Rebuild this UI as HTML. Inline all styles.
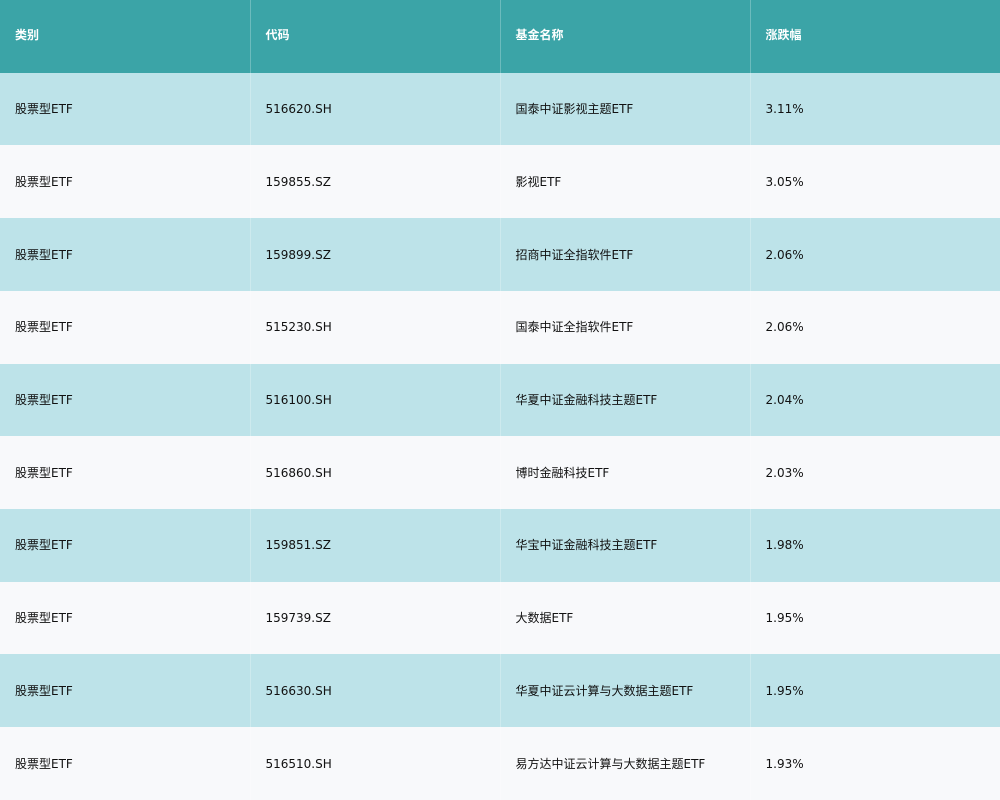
<!DOCTYPE html>
<html><head><meta charset="utf-8"><style>
body{margin:0;width:1000px;height:800px;overflow:hidden;font-family:"DejaVu Sans","Noto Sans CJK SC",sans-serif;font-size:12px;color:#111}
table{border-collapse:collapse;width:1000px;table-layout:fixed}
td,th{height:72.73px;padding:0 0 0 15px;text-align:left;border-left:1px solid rgba(255,255,255,.25);box-sizing:border-box;line-height:14px}
td:first-child,th:first-child{border-left:none}
th{background:#3ba4a7;color:#fff;font-weight:bold;padding-bottom:3px}
tr:nth-child(even) td{background:#bde3e9}
tr:nth-child(odd) td{background:#f8f9fb}
</style></head><body>
<table>
<tr><th>类别</th><th>代码</th><th>基金名称</th><th>涨跌幅</th></tr>
<tr><td>股票型ETF</td><td>516620.SH</td><td>国泰中证影视主题ETF</td><td>3.11%</td></tr>
<tr><td>股票型ETF</td><td>159855.SZ</td><td>影视ETF</td><td>3.05%</td></tr>
<tr><td>股票型ETF</td><td>159899.SZ</td><td>招商中证全指软件ETF</td><td>2.06%</td></tr>
<tr><td>股票型ETF</td><td>515230.SH</td><td>国泰中证全指软件ETF</td><td>2.06%</td></tr>
<tr><td>股票型ETF</td><td>516100.SH</td><td>华夏中证金融科技主题ETF</td><td>2.04%</td></tr>
<tr><td>股票型ETF</td><td>516860.SH</td><td>博时金融科技ETF</td><td>2.03%</td></tr>
<tr><td>股票型ETF</td><td>159851.SZ</td><td>华宝中证金融科技主题ETF</td><td>1.98%</td></tr>
<tr><td>股票型ETF</td><td>159739.SZ</td><td>大数据ETF</td><td>1.95%</td></tr>
<tr><td>股票型ETF</td><td>516630.SH</td><td>华夏中证云计算与大数据主题ETF</td><td>1.95%</td></tr>
<tr><td>股票型ETF</td><td>516510.SH</td><td>易方达中证云计算与大数据主题ETF</td><td>1.93%</td></tr>
</table>
</body></html>
